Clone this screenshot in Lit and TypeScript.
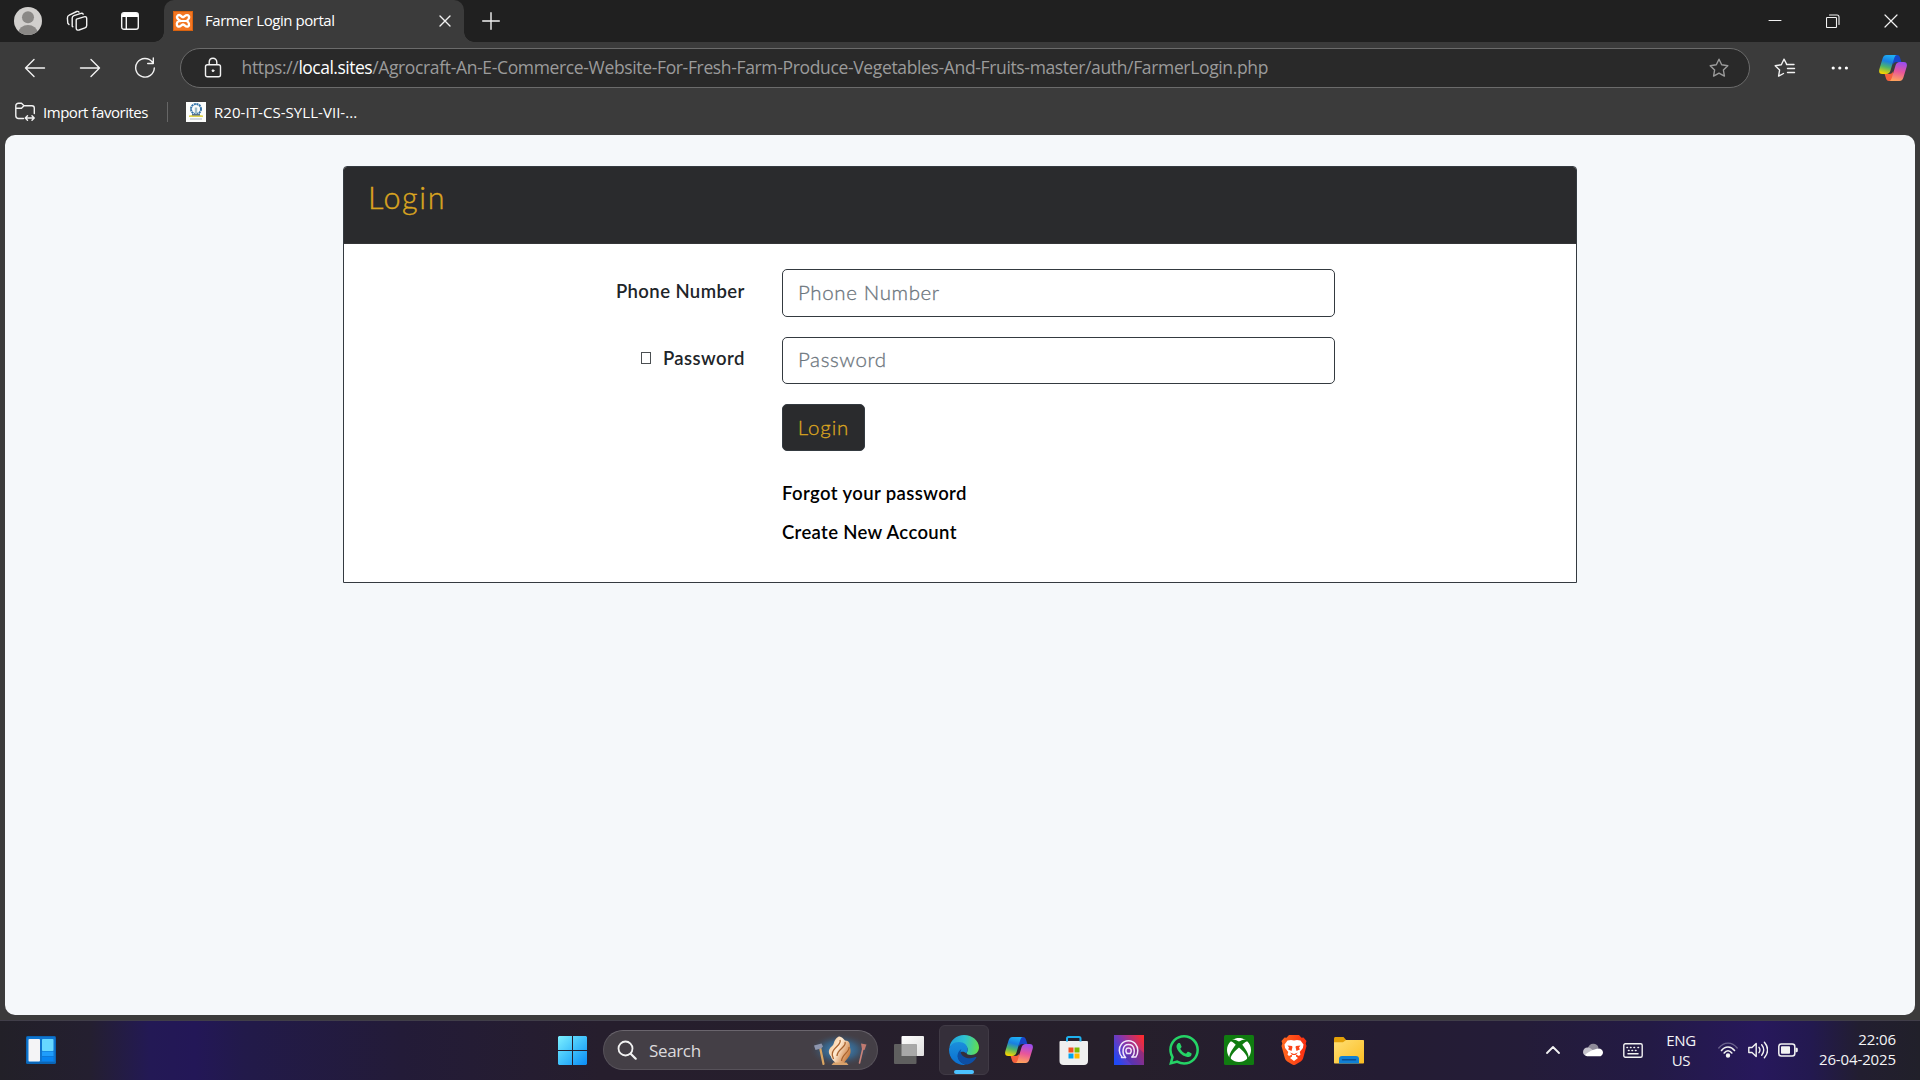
import { LitElement, html, svg, css } from "lit";
import { customElement } from "lit/decorators.js";

const copilot = (id: string) => html`<svg width="28" height="26" viewBox="0 0 28 26">
  <defs>
    <linearGradient id="${id}a" x1="0.6" y1="0" x2="0.35" y2="1"><stop offset="0" stop-color="#1eb0f5"/><stop offset=".35" stop-color="#1a7fe0"/><stop offset=".65" stop-color="#4fb568"/><stop offset="1" stop-color="#f5d400"/></linearGradient>
    <linearGradient id="${id}b" x1="0.6" y1="0" x2="0.4" y2="1"><stop offset="0" stop-color="#9a4df0"/><stop offset=".5" stop-color="#e8569a"/><stop offset="1" stop-color="#ffa45c"/></linearGradient>
  </defs>
  <path d="M14 0h4c2 0 2.700 1.400 3.200 3.200L22.400 7H18c-2.500 0-3.600 1-4.200 3z" fill="#1746c8"/>
  <path d="M14 26h-4c-2 0-2.700-1.400-3.200-3.200L5.600 19H10c2.500 0 3.600-1 4.200-3z" fill="#f4603c"/>
  <path d="M7.500 0H18c-1.600 0-2.300 1.600-2.900 3.500L11.500 15.500C10.800 17.800 9.600 19 7.200 19H3.200C.3 19-.4 16.700.4 14L3.500 3.700C4.200 1.400 5.200 0 7.500 0z" fill="url(#${id}a)"/>
  <path d="M20.500 26H10c1.600 0 2.300-1.600 2.900-3.500l3.600-12C17.200 8.200 18.400 7 20.800 7h4c2.900 0 3.600 2.300 2.800 5l-3.100 10.300c-.7 2.300-1.700 3.700-4 3.700z" fill="url(#${id}b)"/>
</svg>`;

const starPath = "M10 1.200l2.700 5.600 6.100.9-4.400 4.300 1 6.100L10 15.200l-5.400 2.900 1-6.100L1.200 7.700l6.100-.9z";

const startIcon = html`<svg class="start" width="29" height="29" viewBox="0 0 29 29"><defs><linearGradient id="win" x1="0" y1="0" x2="1" y2="1"><stop offset="0" stop-color="#7df0ff"/><stop offset=".5" stop-color="#3fc0fb"/><stop offset="1" stop-color="#0a8cf5"/></linearGradient></defs>
  <path fill="url(#win)" d="M1 0h13v14H0V1zM15 0h13l1 1v13H15zM0 15h14v14H1l-1-1zM15 15h14v13l-1 1H15z"/></svg>`;

const widgetsIcon = html`<svg width="30" height="28" viewBox="0 0 30 28"><rect width="30" height="28" rx="1.500" fill="#0a66b8"/><rect x="1" y="1" width="28" height="25" rx="1" fill="#0f75cf"/><rect x="2.500" y="3" width="11.500" height="22.500" rx="1" fill="#f4f4f6"/><rect x="16" y="3" width="11.500" height="12" rx=".8" fill="#67d8ff"/><rect x="16" y="15.500" width="11.500" height="4.500" fill="#1f9dfb"/><rect x="16" y="20.700" width="11.500" height="4.500" fill="#0884f0"/></svg>`;

const artIcon = html`<svg width="62" height="36" viewBox="0 0 62 36"><defs>
  <radialGradient id="glow"><stop offset="0" stop-color="#3c9be0" stop-opacity=".95"/><stop offset=".55" stop-color="#356b96" stop-opacity=".7"/><stop offset="1" stop-color="#454048" stop-opacity="0"/></radialGradient>
  <linearGradient id="clay" x1="0" y1="0" x2="1" y2=".6"><stop offset="0" stop-color="#f2c08a"/><stop offset=".5" stop-color="#ffe9cf"/><stop offset="1" stop-color="#c97c3e"/></linearGradient></defs>
  <ellipse cx="31" cy="18" rx="31" ry="17" fill="url(#glow)"/>
  <path d="M11 15l3.500 17" stroke="#d9a562" stroke-width="2.200" stroke-linecap="round"/>
  <path d="M5 13.500l7.500-2 1.500 3-2 2-5.500 1.500z" fill="#8d95ad"/>
  <path d="M52 11.500l5.500 1-2 5.500-2.500-.6z" fill="#c07a70"/><path d="M53.800 17L50.500 31" stroke="#c9837a" stroke-width="1.600" stroke-linecap="round"/>
  <path d="M29 5c3-1.500 4.500 1.500 7 3.500 4.500 0 5 3 5 7 1.500 5 0 8-2.500 11-1.500 2-3 3-3.500 5H26.500c-1-2.500-4-3.500-4.500-7-2.500-3-3-6-.500-9 1.500-1.500 3-2.500 3.500-5 .5-2 2-4.500 4-5.500z" fill="url(#clay)"/>
  <path d="M31 8c2 5-7 7-7.500 13M36 10c2 5-8 7-8 14M40 15c1 5-7 7-7.500 14M24.500 27c-1-2-2-4-1-7" fill="none" stroke="#a8622e" stroke-width="1.300"/>
  <path d="M24.500 30.500h13l2 2.500h-17z" fill="#d9a36c"/></svg>`;

const taskViewIcon = html`<svg width="30" height="28" viewBox="0 0 30 28"><defs><linearGradient id="tv" x1="0" y1="0" x2="1" y2="1"><stop offset="0" stop-color="#fff"/><stop offset="1" stop-color="#dedede"/></linearGradient></defs><rect x="7.500" y="0" width="22.500" height="20" rx="1" fill="url(#tv)"/><rect x="0" y="8" width="22.500" height="20" rx="1" fill="#5f5f5f"/><rect x="7.500" y="8" width="15" height="12" fill="#a8a8a8"/></svg>`;

const edgeIcon = html`<svg width="30" height="30" viewBox="0 0 30 30"><defs>
  <linearGradient id="e1" x1="0" y1=".4" x2="1" y2=".5"><stop offset="0" stop-color="#1fa0e0"/><stop offset=".5" stop-color="#2fc2cf"/><stop offset="1" stop-color="#62e04e"/></linearGradient>
  <linearGradient id="e2" x1="0" y1="0" x2="0" y2="1"><stop offset="0" stop-color="#1b8fdc"/><stop offset="1" stop-color="#0a6fd0"/></linearGradient></defs>
  <path d="M0.500 12C1.500 5 7.500 0 15 0c8.500 0 15 6 15 12.500 0 4.500-3.500 7.500-8 7.500-3 0-4.300-1-4.300-2 0-.9 1-1.300 1-3.500 0-3-3-5.500-7-5.500C6.500 9 2.500 10 .5 12z" fill="url(#e1)"/>
  <path d="M0 15C0 10.500 4.500 7 10 7c5 0 8.700 3 8.700 7.500 0 2-1.200 2.700-1.200 4-4-4-9.500-.5-8.500 4 .7 3.500 4.500 6.500 8 7.300-.8.200-1.400.2-2 .2C6.700 30 0 23.300 0 15z" fill="url(#e2)"/>
  <path d="M12.500 14c-4 2.500-4.800 7-3 10.500 2 3.700 6 5.300 9 5 4-.8 7-3.500 8.800-6.700.3-.7-.3-1-.9-.7-5 2.500-13.500.9-14.700-4.600-.3-1.300.2-2.500.8-3.500z" fill="#0d4fa5"/></svg>`;

const storeIcon = html`<svg width="30" height="30" viewBox="0 0 30 30"><path d="M1.500 6h26c1 0 1.500.5 1.500 1.300V26c0 2.500-1.500 4-4 4H4.500C2 30 .5 28.500.5 26V7C.5 6.500 1 6 1.500 6z" fill="#efefef"/><path d="M8 6.500V3.500C8 2.500 8.500 2 9.500 2h10.500c1 0 1.500.5 1.500 1.500v3" fill="none" stroke="#1fb1ee" stroke-width="2"/><path fill="#f25022" d="M9.500 12.500h5v5h-5z"/><path fill="#7fba00" d="M15.500 12.500h5v5h-5z"/><path fill="#00a4ef" d="M9.500 18.500h5v5h-5z"/><path fill="#ffb900" d="M15.500 18.500h5v5h-5z"/></svg>`;

const printIcon = html`<svg width="30" height="30" viewBox="0 0 30 30"><defs><linearGradient id="pr" x1="0" y1=".75" x2="1" y2=".15"><stop offset="0" stop-color="#1f49f5"/><stop offset=".5" stop-color="#8a35a8"/><stop offset="1" stop-color="#fb2b31"/></linearGradient></defs><rect width="30" height="30" fill="url(#pr)"/><path d="M10 22l8 8h12V18l-7-6z" fill="#3a2a9a" opacity=".35"/>
  <g fill="none" stroke="#f0e6fa" stroke-width="1.500" stroke-linecap="round" stroke-linejoin="round"><path d="M11.500 22.500H7.500M8 22C4.500 18.500 4.500 12.500 7.500 9c3.500-4.300 10.500-4.300 14 0 3 3.500 3 9.500.3 13H18"/><path d="M11.500 22.500C7.800 18.500 8 9.500 14.500 9.500s7.200 8.500 3.500 12.500"/><path d="M13 18.500c-1.800-2.500-1.500-5.500 1.500-5.500s3.500 3 1.700 5.500z"/></g></svg>`;

const whatsappIcon = html`<svg width="30" height="30" viewBox="0 0 24 24"><path fill="#25d366" d="M17.472 14.382c-.297-.149-1.758-.867-2.030-.967-.273-.099-.471-.148-.670.150-.197.297-.767.966-.940 1.164-.173.199-.347.223-.644.075-.297-.150-1.255-.463-2.390-1.475-.883-.788-1.480-1.761-1.653-2.059-.173-.297-.018-.458.130-.606.134-.133.298-.347.446-.520.149-.174.198-.298.298-.497.099-.198.050-.371-.025-.520-.075-.149-.669-1.612-.916-2.207-.242-.579-.487-.500-.669-.510-.173-.008-.371-.010-.570-.010-.198 0-.520.074-.792.372-.272.297-1.040 1.016-1.040 2.479 0 1.462 1.065 2.875 1.213 3.074.149.198 2.096 3.200 5.077 4.487.709.306 1.262.489 1.694.625.712.227 1.360.195 1.871.118.571-.085 1.758-.719 2.006-1.413.248-.694.248-1.289.173-1.413-.074-.124-.272-.198-.570-.347m-5.421 7.403h-.004a9.870 9.870 0 0 1-5.031-1.378l-.361-.214-3.741.982.998-3.648-.235-.374a9.860 9.860 0 0 1-1.510-5.260c.001-5.450 4.436-9.884 9.888-9.884 2.640 0 5.122 1.030 6.988 2.898a9.825 9.825 0 0 1 2.893 6.994c-.003 5.450-4.437 9.884-9.885 9.884m8.413-18.297A11.815 11.815 0 0 0 12.050 0C5.495 0 .160 5.335.157 11.892c0 2.096.547 4.142 1.588 5.945L.057 24l6.305-1.654a11.882 11.882 0 0 0 5.683 1.448h.005c6.554 0 11.890-5.335 11.893-11.893a11.821 11.821 0 0 0-3.480-8.413Z"/></svg>`;

const xboxIcon = html`<svg width="30" height="30" viewBox="0 0 30 30"><rect width="30" height="30" rx="1.500" fill="#107c10"/><g transform="translate(3 3)"><path fill="#fff" d="M4.102 21.033C6.211 22.881 8.977 24 12 24c3.026 0 5.789-1.119 7.902-2.967 1.877-1.912-4.316-8.709-7.902-11.417-3.582 2.708-9.779 9.505-7.898 11.417zm11.160-14.406c2.500 2.961 7.484 10.313 6.076 12.912C23.002 17.480 24 14.861 24 12.004c0-3.340-1.365-6.362-3.570-8.536 0 0-.027-.022-.082-.042-.063-.022-.152-.045-.281-.045-.592 0-1.985.434-4.805 3.246zM3.654 3.426c-.057.020-.082.041-.086.042C1.365 5.642 0 8.664 0 12.004c0 2.854.998 5.473 2.661 7.533-1.401-2.605 3.579-9.951 6.080-12.910-2.820-2.813-4.216-3.245-4.806-3.245-.131 0-.223.021-.281.046v-.002zM12 3.551S9.055 1.828 6.755 1.746c-.903-.033-1.454.295-1.521.339C7.379.646 9.659 0 11.984 0H12c2.334 0 4.605.646 6.766 2.085-.068-.046-.615-.372-1.520-.339C14.946 1.828 12 3.545 12 3.545v.006z"/></g></svg>`;

const braveIcon = html`<svg width="26" height="30" viewBox="0 0 26 30"><defs><linearGradient id="br"><stop offset="0" stop-color="#ff6a20"/><stop offset="1" stop-color="#fb2c10"/></linearGradient></defs>
  <path fill="url(#br)" d="M8 0h10l2.500 2.800 2-.3L25.500 6l-.8 2.500.8 2.500-3.300 12c-.4 1.500-1.300 2.500-2.500 3.400l-5 3.100c-1.100.7-2.300.7-3.400 0l-5-3.100c-1.200-.9-2.100-1.900-2.500-3.400L.5 11l.8-2.500L.5 6l3-3.500 2 .3z"/>
  <path fill="#fff" d="M13 5.500l3-.6 3.500.6 3 4-.6 3.500-3.200 4 .8 2.500-1.500 1.500-3-1.500 0 2 2 1.500L13 26l-4-3 2-1.500 0-2L8 21l-1.500-1.500.8-2.500-3.200-4-.6-3.500 3-4L10 4.900z"/>
  <path fill="#fb4519" d="M6.500 10.500l4.500.5.500 1-1 4-3.300-1.500.8-2zM19.500 10.500l-4.500.5-.5 1 1 4 3.300-1.500-.8-2zM9 17.500l4 1.500 4-1.500-2.500 2.500h-3z"/></svg>`;

const folderIcon = html`<svg width="30" height="27" viewBox="0 0 30 27"><defs><linearGradient id="fo" x1="0" y1="0" x2="1" y2="1"><stop offset="0" stop-color="#ffdf75"/><stop offset="1" stop-color="#fbbd22"/></linearGradient></defs><path d="M0 1.500C0 .6.600 0 1.500 0h8l2.800 3.200v3H0z" fill="#e3a008"/><path d="M0 5.200h9l3-2.200h17c.7 0 1 .4 1 1v21.500c0 .6-.4 1-1 1H1c-.6 0-1-.4-1-1z" fill="url(#fo)"/><path d="M5 26.500V22c0-2 1-3 3-3h14c2 0 3 1 3 3v4.500z" fill="#1180d4"/><path d="M8.500 22.700h13" stroke="#0b4f94" stroke-width="1.500" stroke-linecap="round"/></svg>`;

const line = (w: number, h: number, body: unknown, cls = "") =>
  html`<svg class="line ${cls}" width=${w} height=${h} viewBox="0 0 ${w} ${h}">${body}</svg>`;

@customElement("app-root")
export class AppRoot extends LitElement {
  static styles = css`
    :host { display: block; width: 1920px; height: 1080px; overflow: hidden; font-family: "Open Sans", "Noto Sans", sans-serif; background: #3b3b3b; }
    * { box-sizing: border-box; }
    svg { display: block; flex: none; }
    .line { fill: none; stroke: #f2f2f2; stroke-width: 1.400; stroke-linecap: round; stroke-linejoin: round; }
    .muted { stroke: #9a9a9a; }
    .screen { display: flex; flex-direction: column; height: 1080px; white-space: nowrap; }
    .cell { display: flex; align-items: center; justify-content: center; flex: none; }
    .titlebar { height: 42px; flex: none; background: #202020; display: flex; }
    .avatar { width: 56px; height: 41px; }
    .spaces { width: 43px; height: 42px; padding-right: 1px; }
    .actions { width: 62px; height: 42px; }
    .tab { margin-left: 3px; width: 300px; height: 42px; background: #3b3b3b; border-radius: 10px 10px 0 0; position: relative; padding: 0 9px 0 9px; display: flex; align-items: center; }
    .tab::before, .tab::after { content: ""; position: absolute; bottom: 0; width: 10px; height: 10px; }
    .tab::before { left: -10px; background: radial-gradient(circle at 0 0, transparent 9.500px, #3b3b3b 10px); }
    .tab::after { right: -10px; background: radial-gradient(circle at 100% 0, transparent 9.500px, #3b3b3b 10px); }
    .tab-title { margin-left: 12px; flex: 1; font-size: 15px; line-height: 20px; color: #fff; letter-spacing: -0.460px; padding-bottom: 2px; }
    .tab-close { width: 20px; }
    .newtab { width: 53px; height: 42px; }
    .window { margin-left: auto; display: flex; }
    .window .cell { width: 58px; height: 42px; }
    .toolbar { height: 52px; flex: none; display: flex; align-items: center; }
    .nav { width: 55px; }
    .nav.first { margin-left: 7.500px; }
    .address { margin-left: 7.500px; flex: none; width: 1570px; height: 40px; border: 1px solid #6b6b6b; border-radius: 20px; background: #292929; display: flex; align-items: center; padding: 0 20px 0 22.500px; }
    .url { margin-left: 20px; flex: 1; font-size: 17.500px; line-height: 24px; color: #9b9b9b; letter-spacing: -0.350px; padding-bottom: 2px; }
    .url b { font-weight: 400; color: #fff; letter-spacing: -0.500px; }
    .tools { display: flex; margin-left: 7px; flex: none; }
    .tools .cell { width: 55px; }
    .tools .cell.last { width: 51px; }
    .bookmarks { height: 41px; flex: none; display: flex; align-items: center; padding: 0 0 5px 15px; color: #fff; font-size: 15px; }
    .bm1 { margin-left: 8px; letter-spacing: -0.460px; }
    .divider { width: 1px; height: 20px; background: #666; margin-left: 19px; }
    .bmicon { margin-left: 18px; }
    .bm2 { margin-left: 8px; letter-spacing: 0.050px; }
    .page { height: 880px; flex: none; margin: 0 5px; background: #f5f8fa; border-radius: 10px; font-family: "Lato", sans-serif; padding-top: 31px; }
    .card { margin-left: 338px; width: 1234px; height: 417px; border: 1px solid #343a40; border-radius: 4px 4px 0 0; background: #fff; overflow: hidden; }
    .card-header { height: 77px; background: #2a2b2d; border-bottom: 1px solid #343537; padding: 10px 24px; color: #daa520; font-weight: 300; font-size: 30.500px; line-height: 40px; letter-spacing: 1.600px; -webkit-text-stroke: 0.400px currentColor; }
    .form { display: grid; grid-template-columns: 400px 553px; column-gap: 38px; row-gap: 20px; padding-top: 25px; }
    .label { justify-self: end; display: flex; align-items: center; font-weight: 600; font-size: 18.500px; line-height: 24px; color: #212529; padding-top: 10px; height: 34px; letter-spacing: 0.420px; margin-right: -0.800px; }
    .label.second { padding-top: 9px; height: 33px; }
    .missing { width: 10px; height: 12px; border: 1px solid #4b4f52; margin: 0 12px 0 0; }
    .field { height: 47px; width: 553px; border: 1px solid #343a40; border-radius: 5px; background: #fff; padding: 0 15px 3px; font: 300 20.500px/30px "Lato", sans-serif; color: #6c757d; outline: 0; letter-spacing: 0.620px; }
    .field.tall { height: 48px; }
    .field::placeholder { color: #6c757d; opacity: 1; -webkit-text-stroke: 0.300px currentColor; }
    .col { grid-column: 2; display: flex; flex-direction: column; align-items: flex-start; }
    .submit { width: 83px; height: 47px; border: 1px solid #343a40; border-radius: 5px; background: #2a2b2d; color: #daa520; font: 300 20.500px/30px "Lato", sans-serif; padding: 0 0 2px; letter-spacing: 0.900px; -webkit-text-stroke: 0.300px currentColor; }
    .link { font-weight: 600; font-size: 18.500px; line-height: 24px; color: #000; letter-spacing: 0.390px; }
    .forgot { margin-top: 30px; }
    .create { margin-top: 15px; letter-spacing: 0.340px; }
    .taskbar { height: 60px; margin-top: 5px; flex: none; box-shadow: inset 0 1px #413e49; display: flex; align-items: center; color: #f4f4f6;
      background: linear-gradient(90deg, #222028 0, #241f30 90px, #231955 150px, #231757 195px, #221a4a 245px, #231b38 400px, #261e2d 600px, #261f2b 1130px, #241c33 1380px, #241c38 1520px, #231a45 1650px, #27185c 1760px, #231950 1810px, #221e30 1860px, #21202a 1920px); }
    .widgets { margin-left: 26px; width: 532px; }
    .start { margin-top: 1px; }
    .search { margin-left: 16px; width: 275px; height: 40px; border-radius: 20px; background: #443f46; border: 1px solid #57525a; border-top-color: #6a656d; display: flex; align-items: center; padding: 0 6px 0 13px; font-size: 17px; color: #dcdadd; margin-right: 3.500px; }
    .search-label { margin-left: 12px; flex: 1; letter-spacing: -0.350px; }
    .app { width: 55px; height: 50px; }
    .tile { width: 50px; height: 50px; border-radius: 6px; background: #352f3a; border: 1px solid #403a45; display: flex; flex-direction: column; align-items: center; padding-top: 9px; }
    .running { width: 20px; height: 4px; border-radius: 2px; background: #4cc2ff; margin-top: 5px; flex: none; }
    .tray { margin-left: auto; display: flex; align-items: center; padding-right: 24px; }
    .tray .cell { width: 40px; }
    .tray .cell.small { width: 30px; }
    .lang { width: 56px; margin-right: 4px; text-align: center; font-size: 15px; line-height: 20px; letter-spacing: -0.300px; padding-bottom: 1px; }
    .clock { width: 93px; text-align: right; font-size: 15px; line-height: 20px; letter-spacing: -0.120px; padding-bottom: 3px; }
  `;

  render() {
    return html`<div class="screen">
      <header class="titlebar">
        <div class="cell avatar"><svg width="28" height="28" viewBox="0 0 28 28"><defs><clipPath id="av"><circle cx="14" cy="14" r="14"/></clipPath></defs><g clip-path="url(#av)"><rect width="28" height="28" fill="#d1cfcd"/><circle cx="14" cy="10.300" r="6" fill="#8a8886"/><ellipse cx="14" cy="25.500" rx="9.500" ry="7.500" fill="#8a8886"/></g></svg></div>
        <div class="cell spaces">${line(22, 22, svg`<path d="M10.500 9.200l7.500-2.400c1.700-.5 2.700.2 2.700 1.800v6.800c0 1.200-.5 2-1.700 2.400L13 20c-1.600.5-2.800-.3-2.800-2V9.800zM6.800 16.800l-.6-.6V8c0-1.200.5-2 1.700-2.400L15 3.300c1-.3 1.700 0 2.200.8M3 14.500l-1.200-1.300-.4-5c-.1-1.500.5-2.500 1.800-3L10.800 1.500c1-.3 1.800-.1 2.200.6"/>`)}</div>
        <div class="cell actions"><svg width="18" height="18" viewBox="0 0 18 18"><path d="M3 .7h12c1.500 0 2.300 1 2.300 2.300v12c0 1.500-1 2.300-2.300 2.300H3C1.500 17.300.7 16.300.7 15V3C.7 1.500 1.700.7 3 .7zM5.300 5v12" fill="none" stroke="#f4f4f4" stroke-width="1.400"/><path d="M1 5V3c0-1.300.8-2 2-2h12c1.200 0 2 .7 2 2v2z" fill="#fff"/></svg></div>
        <div class="tab">
          <svg width="20" height="20" viewBox="0 0 20 20"><rect width="20" height="20" rx="1" fill="#f37623"/><rect x=".5" y=".5" width="19" height="19" fill="none" stroke="#d9620f"/><path d="M8 10C4.500 9 2.800 6 5 4.300 7.500 3 8 5.500 9.500 6.200 11 6.500 12.500 3 15 4.300c2.500 1.700.3 4.500-1.500 5.700 2.500 1 3.500 4 1.500 5.500-2.500 1-3.500-2-5-2s-2.500 3-5 2c-2-1.500-1.500-4.500 1-5.500z" fill="none" stroke="#fff" stroke-width="2.300"/><path d="M7 10h6" stroke="#fff" stroke-width="2"/></svg>
          <span class="tab-title">Farmer Login portal</span>
          <div class="cell tab-close">${line(12, 12, svg`<path d="M1 1l10 10M11 1L1 11"/>`)}</div>
        </div>
        <div class="cell newtab">${line(18, 18, svg`<path d="M9 .7v16.600M.7 9h16.600"/>`)}</div>
        <div class="window">
          <div class="cell">${line(14, 14, svg`<path d="M1 6.500h12" stroke-width="1"/>`)}</div>
          <div class="cell">${line(14, 14, svg`<path d="M.5 4.200c0-.5.300-.7.700-.7h8.600c.5 0 .7.300.7.700v8.600c0 .5-.3.700-.7.700H1.200c-.5 0-.7-.3-.7-.7zM3.500 1h7.500c1.500 0 2 .8 2 2v7.500" stroke-width="1.100"/>`)}</div>
          <div class="cell">${line(14, 14, svg`<path d="M1 1l12 12M13 1L1 13" stroke-width="1.200"/>`)}</div>
        </div>
      </header>
      <div class="toolbar">
        <div class="cell nav first">${line(22, 20, svg`<path d="M20.500 10H1.500M10 1.500L1.500 10l8.500 8.500"/>`)}</div>
        <div class="cell nav">${line(22, 20, svg`<path d="M1.500 10h19M12 1.500l8.500 8.500-8.500 8.500"/>`)}</div>
        <div class="cell nav">${line(22, 22, svg`<path d="M20.300 11A9.300 9.300 0 1 1 18.300 5M19.300 1v5.500h-5.600"/>`)}</div>
        <div class="address">
          ${line(18, 22, svg`<path d="M3.500 7.700h11c1.300 0 2 .7 2 2v8.100c0 1.300-.7 2-2 2h-11c-1.300 0-2-.7-2-2V9.700c0-1.300.7-2 2-2zM5.200 7.500V5.300c0-5.400 7.600-5.400 7.600 0v2.200"/><circle cx="9" cy="13.700" r="1" fill="#fff" stroke-width=".8"/>`)}
          <span class="url">https://<b>local.sites</b>/Agrocraft-An-E-Commerce-Website-For-Fresh-Farm-Produce-Vegetables-And-Fruits-master/auth/FarmerLogin.php</span>
          ${line(20, 20, svg`<path d=${starPath}/>`, "muted")}
        </div>
        <div class="tools">
          <div class="cell">${line(22, 20, svg`<path d="M12.500 5.800L10 1.200 7.300 6.800l-6.100.9 4.400 4.300-1 6.100L9.500 15.500M12.500 6.500h7.500M13.500 10.500H20.500M13.500 14.500h7"/>`)}</div>
          <div class="cell"><svg width="18" height="4" viewBox="0 0 18 4" fill="#fff"><circle cx="2.200" cy="2" r="1.600"/><circle cx="8.800" cy="2" r="1.600"/><circle cx="15.400" cy="2" r="1.600"/></svg></div>
          <div class="cell last">${copilot("c")}</div>
        </div>
      </div>
      <div class="bookmarks">
        ${line(20, 20, svg`<path d="M8.500 16.500H3.500c-1.700 0-2.700-1-2.700-2.700V4c0-1.700 1-2.700 2.700-2.700h3L9 3.800h8c1.500 0 2.300.8 2.300 2.300v5.400M.8 6.300h5.700L9 3.800M10.500 16h8.500M12.500 13.800L10.300 16l2.200 2.200M17 13.800l2.200 2.200-2.200 2.200"/>`)}
        <span class="bm1">Import favorites</span><span class="divider"></span>
        <svg class="bmicon" width="20" height="20" viewBox="0 0 20 20"><rect width="20" height="20" fill="#fcfdfb"/><circle cx="10" cy="7" r="5" fill="none" stroke="#3273a8" stroke-width="2" stroke-dasharray="2 .6"/><path d="M8.800 5.500h2.400v7H8.800z" fill="#9dbcc8"/><path d="M3 13.500c4-1 10-1 14 0v1.500H3z" fill="#dfd44e"/><path d="M6 12h8v1.500H6z" fill="#57718c"/><path d="M4 17h12" stroke="#a9b8c2"/></svg>
        <span class="bm2">R20-IT-CS-SYLL-VII-...</span>
      </div>
      <main class="page">
        <section class="card">
          <div class="card-header">Login</div>
          <div class="form">
            <div class="label">Phone Number</div>
            <input class="field tall" placeholder="Phone Number" />
            <div class="label second"><span class="missing"></span>Password</div>
            <input class="field" type="password" placeholder="Password" />
            <div class="col">
              <button class="submit">Login</button>
              <span class="link forgot">Forgot your password</span>
              <span class="link create">Create New Account</span>
            </div>
          </div>
        </section>
      </main>
      <footer class="taskbar">
        <div class="widgets">${widgetsIcon}</div>
        ${startIcon}
        <div class="search">${line(20, 20, svg`<circle cx="8.500" cy="8.500" r="7" stroke-width="1.800"/><path d="M13.700 13.700l5 5" stroke-width="2.200"/>`)}<span class="search-label">Search</span>${artIcon}</div>
        <div class="cell app">${taskViewIcon}</div>
        <div class="cell app"><div class="tile">${edgeIcon}<span class="running"></span></div></div>
        <div class="cell app">${copilot("t")}</div>
        <div class="cell app">${storeIcon}</div>
        <div class="cell app">${printIcon}</div>
        <div class="cell app">${whatsappIcon}</div>
        <div class="cell app">${xboxIcon}</div>
        <div class="cell app">${braveIcon}</div>
        <div class="cell app">${folderIcon}</div>
        <div class="tray">
          <div class="cell">${line(14, 8, svg`<path d="M1 7l6-6 6 6" stroke-width="1.800"/>`)}</div>
          <div class="cell"><svg width="20" height="14" viewBox="0 0 20 14"><path d="M5 5a5.500 5.500 0 0 1 10.500-.5L12 9H3z" fill="#8f8b99"/><path d="M0 9.200C0 6.500 2 4.500 4.500 4.500c1.500 0 2.500.5 3.500 1.200L14 10 5 13C2 13 0 11.500 0 9.200z" fill="#c6c4cc"/><path d="M2 12c3-3.500 9-5.500 12.500-6.500C18 5.200 20 7 20 9.400S18.200 13.300 16 13.300H5C3.800 13.300 2.800 13 2 12z" fill="#fff"/></svg></div>
          <div class="cell">${line(20, 15, svg`<rect x=".8" y=".8" width="18.400" height="13.400" rx="1.500"/><path d="M4 4.500h.5M7.500 4.500H8M11 4.500h.5M15 4.500h.5M5.500 7.500H6M9 7.500h.5M12.500 7.500h.5M5 10.800h10" stroke-width="1.600"/>`)}</div>
          <div class="lang"><div>ENG</div><div>US</div></div>
          <div class="cell small"><svg class="line" width="20" height="16" viewBox="0 0 20 16"><path d="M.8 6C6-.5 14-.5 19.200 6" stroke="#6a628c"/><path d="M3.500 8.500c3.500-4.700 9.500-4.700 13 0M6.200 11c2.200-3 5.400-3 7.600 0" stroke-width="1.600"/><circle cx="10" cy="13.500" r="1.500" fill="#fff"/></svg></div>
          <div class="cell small">${line(20, 18, svg`<path d="M.8 6.500h3.200L8.200 2.500v13L4 11.500H.8zM11 6.300c1.200 1.700 1.200 3.700 0 5.400M13.700 3.800c2.500 3.200 2.500 7.200 0 10.400M16.400 1.300c4 4.800 4 10.600 0 15.400"/>`)}</div>
          <div class="cell small"><svg width="20" height="14" viewBox="0 0 20 14"><rect x=".8" y="1" width="16" height="12" rx="2.500" fill="none" stroke="#f2f2f2" stroke-width="1.500"/><rect x="3" y="3.200" width="9" height="7.600" rx=".8" fill="#f2f2f2"/><path d="M17.500 4.800h1c.8 0 1.300.5 1.300 1.200v2c0 .7-.5 1.200-1.300 1.200h-1z" fill="#f2f2f2"/></svg></div>
          <div class="clock"><div>22:06</div><div>26-04-2025</div></div>
        </div>
      </footer>
    </div>`;
  }
}
